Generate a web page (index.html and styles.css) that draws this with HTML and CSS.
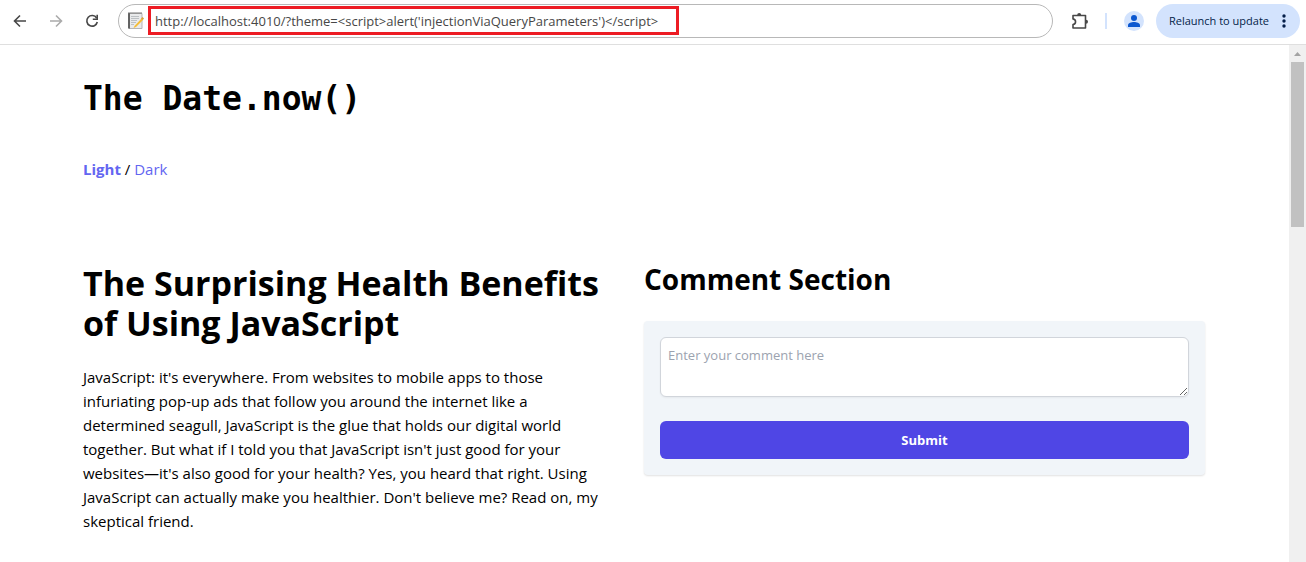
FILE: index.html
```html
<!DOCTYPE html>
<html lang="en">
<head>
<meta charset="utf-8">
<title>The Date.now()</title>
<link rel="stylesheet" href="styles.css">
</head>
<body>
<header class="toolbar">
  <div class="nav">
    <button class="icon-btn" aria-label="Back"><svg width="16" height="16" viewBox="0 0 16 16"><path d="M14 8H3M8 2.5L2.5 8L8 13.5" fill="none" stroke="#474747" stroke-width="1.6"/></svg></button>
    <button class="icon-btn" aria-label="Forward"><svg width="16" height="16" viewBox="0 0 16 16"><path d="M2 8H13M8 2.5L13.5 8L8 13.5" fill="none" stroke="#ababab" stroke-width="1.6"/></svg></button>
    <button class="icon-btn" aria-label="Reload"><svg width="16" height="16" viewBox="0 0 16 16"><path d="M12.6 5A5.3 5.3 0 1 0 13.3 9" fill="none" stroke="#474747" stroke-width="1.6"/><path d="M14 1.8V7H8.8V5.4H12.4V1.8Z" fill="#474747"/></svg></button>
  </div>
  <div class="address">
    <svg width="16" height="18" viewBox="0 0 16 18"><path d="M1 1.5H14V16.5H1Z" fill="#e9eaeb" stroke="#b5b5b5"/><path d="M1 1V16.5" stroke="#333" stroke-width="1.4"/><path d="M0 1H14" stroke="#777"/><path d="M3 4.5H11M3 6.5H11M3 8.5H9M3 10.5H8M3 12.5H6" stroke="#bcc0c3"/><path d="M6.5 14L13.5 6.5L15 8L8 15L5.5 16Z" fill="#f5bd35"/><path d="M13 6.5L14.5 5L16 6.5L14.8 8Z" fill="#d8a13a"/></svg>
    <input class="url" type="text" aria-label="Address" value="http://localhost:4010/?theme=&lt;script&gt;alert('injectionViaQueryParameters')&lt;/script&gt;">
  </div>
  <div class="actions">
    <button class="icon-btn" aria-label="Extensions"><svg width="18" height="18" viewBox="0 0 18 18"><path d="M2 3.5H14.5V16H2V12.5C5.4 12 5.4 7.4 2 6.9Z" fill="none" stroke="#474747" stroke-width="1.6" stroke-linejoin="round"/><path d="M6.2 3A2 2 0 0 1 10.2 3ZM15 7.7A2 2 0 0 1 15 11.7Z" fill="#474747"/></svg></button>
    <span class="divider"></span>
    <button class="icon-btn avatar" aria-label="Profile"><svg width="20" height="20" viewBox="0 0 20 20"><circle cx="10" cy="10" r="10" fill="#d3e3fd"/><circle cx="10" cy="7" r="3" fill="#0b57d0"/><path d="M4 16V14.2C4 12 7.5 11 10 11S16 12 16 14.2V16Z" fill="#0b57d0"/></svg></button>
    <button class="relaunch">Relaunch to update<svg width="4" height="16" viewBox="0 0 4 16"><g fill="#041e49"><circle cx="2" cy="3" r="1.7"/><circle cx="2" cy="8" r="1.7"/><circle cx="2" cy="13" r="1.7"/></g></svg></button>
  </div>
</header>
<div class="viewport">
  <div class="page">
    <h1 class="site-title">The Date.now()</h1>
    <nav class="themes"><a class="theme current" href="#light">Light</a> / <a class="theme" href="#dark">Dark</a></nav>
    <main class="columns">
      <article class="article">
        <h2 class="article-title">The Surprising Health Benefits of Using JavaScript</h2>
        <p class="text">JavaScript: it's everywhere. From websites to mobile apps to those infuriating pop-up ads that follow you around the internet like a determined seagull, JavaScript is the glue that holds our digital world together. But what if I told you that JavaScript isn't just good for your websites—it's also good for your health? Yes, you heard that right. Using JavaScript can actually make you healthier. Don't believe me? Read on, my skeptical friend.</p>
      </article>
      <section class="comments">
        <h2 class="comments-title">Comment Section</h2>
        <form class="card">
          <textarea class="comment" aria-label="Comment" placeholder="Enter your comment here"></textarea>
          <button class="submit" type="button">Submit</button>
        </form>
      </section>
    </main>
  </div>
  <div class="scrollbar" aria-hidden="true">
    <svg width="17" height="17" viewBox="0 0 17 17"><path d="M5 11L8.5 7L12 11Z" fill="#a3a3a3"/></svg>
    <div class="thumb"></div>
  </div>
</div>
</body>
</html>
```
FILE: styles.css
```css
* { box-sizing: border-box; margin: 0; }
body {
  display: flex;
  flex-direction: column;
  height: 100vh;
  overflow: hidden;
  background: #fff;
  color: #000;
  font: 15px/24px "Open Sans", "Noto Sans", sans-serif;
}
button, input, textarea { font-family: inherit; }
svg { display: block; flex: none; }
.toolbar {
  display: flex;
  align-items: center;
  flex: none;
  height: 45px;
  padding: 0 6px 3px 12px;
  border-bottom: 1px solid #dfdfdf;
}
.nav { display: flex; gap: 20px; margin-right: 18px; }
.icon-btn { padding: 0; border: 0; background: none; }
.address {
  display: flex;
  align-items: center;
  flex: 1;
  gap: 4px;
  height: 34px;
  padding-left: 9px;
  border: 1px solid #b8b8b8;
  border-radius: 17px;
}
.url {
  width: 531px;
  height: 29px;
  padding: 0 4px;
  border: 3px solid #ed1c24;
  background: #fff;
  color: #474747;
  font-size: 13px;
}
.actions { display: flex; align-items: center; margin-left: 18px; }
.divider { width: 2px; height: 16px; margin: 0 17px 0 16px; background: #d3e3fd; }
.avatar { margin-right: 12px; }
.relaunch {
  display: flex;
  align-items: center;
  gap: 13px;
  height: 34px;
  padding: 0 14px 0 13px;
  border: 0;
  border-radius: 17px;
  background: #d3e3fd;
  color: #041e49;
  font-size: 11px;
}
.viewport { display: flex; flex: 1; min-height: 0; }
.page { flex: 1; padding: 34px 84px 32px 83px; overflow: hidden; }
.site-title { font: bold 33px/40px "DejaVu Sans Mono", monospace; }
.themes { margin: 38px 0 80px; }
.theme { color: #6366f1; text-decoration: none; }
.current { font-weight: bold; }
.columns { display: grid; grid-template-columns: 1fr 1fr; align-items: start; }
.article { padding: 2px 32px 0 0; }
.article-title { margin-bottom: 22px; font-size: 34px; line-height: 40px; }
.comments-title { margin-bottom: 24px; font-size: 28px; line-height: 36px; }
.card {
  display: flex;
  flex-direction: column;
  gap: 24px;
  padding: 16px;
  border-radius: 4px;
  background: #f1f5f9;
  box-shadow: 0 1px 2px rgba(0, 0, 0, 0.12);
}
.comment {
  height: 60px;
  padding: 7px;
  border: 1px solid #d1d5db;
  border-radius: 6px;
  background: #fff;
  box-shadow: 0 1px 2px rgba(0, 0, 0, 0.05);
  font-size: 13px;
  line-height: 20px;
  resize: vertical;
}
.comment::placeholder { color: #9ca3af; }
.submit {
  height: 38px;
  border: 0;
  border-radius: 6px;
  background: #4f46e5;
  color: #fff;
  font-size: 13px;
  font-weight: bold;
}
.scrollbar { flex: none; width: 17px; background: #f0f0f0; }
.thumb { height: 165px; margin: 0 2px; background: #c1c1c1; }
```
